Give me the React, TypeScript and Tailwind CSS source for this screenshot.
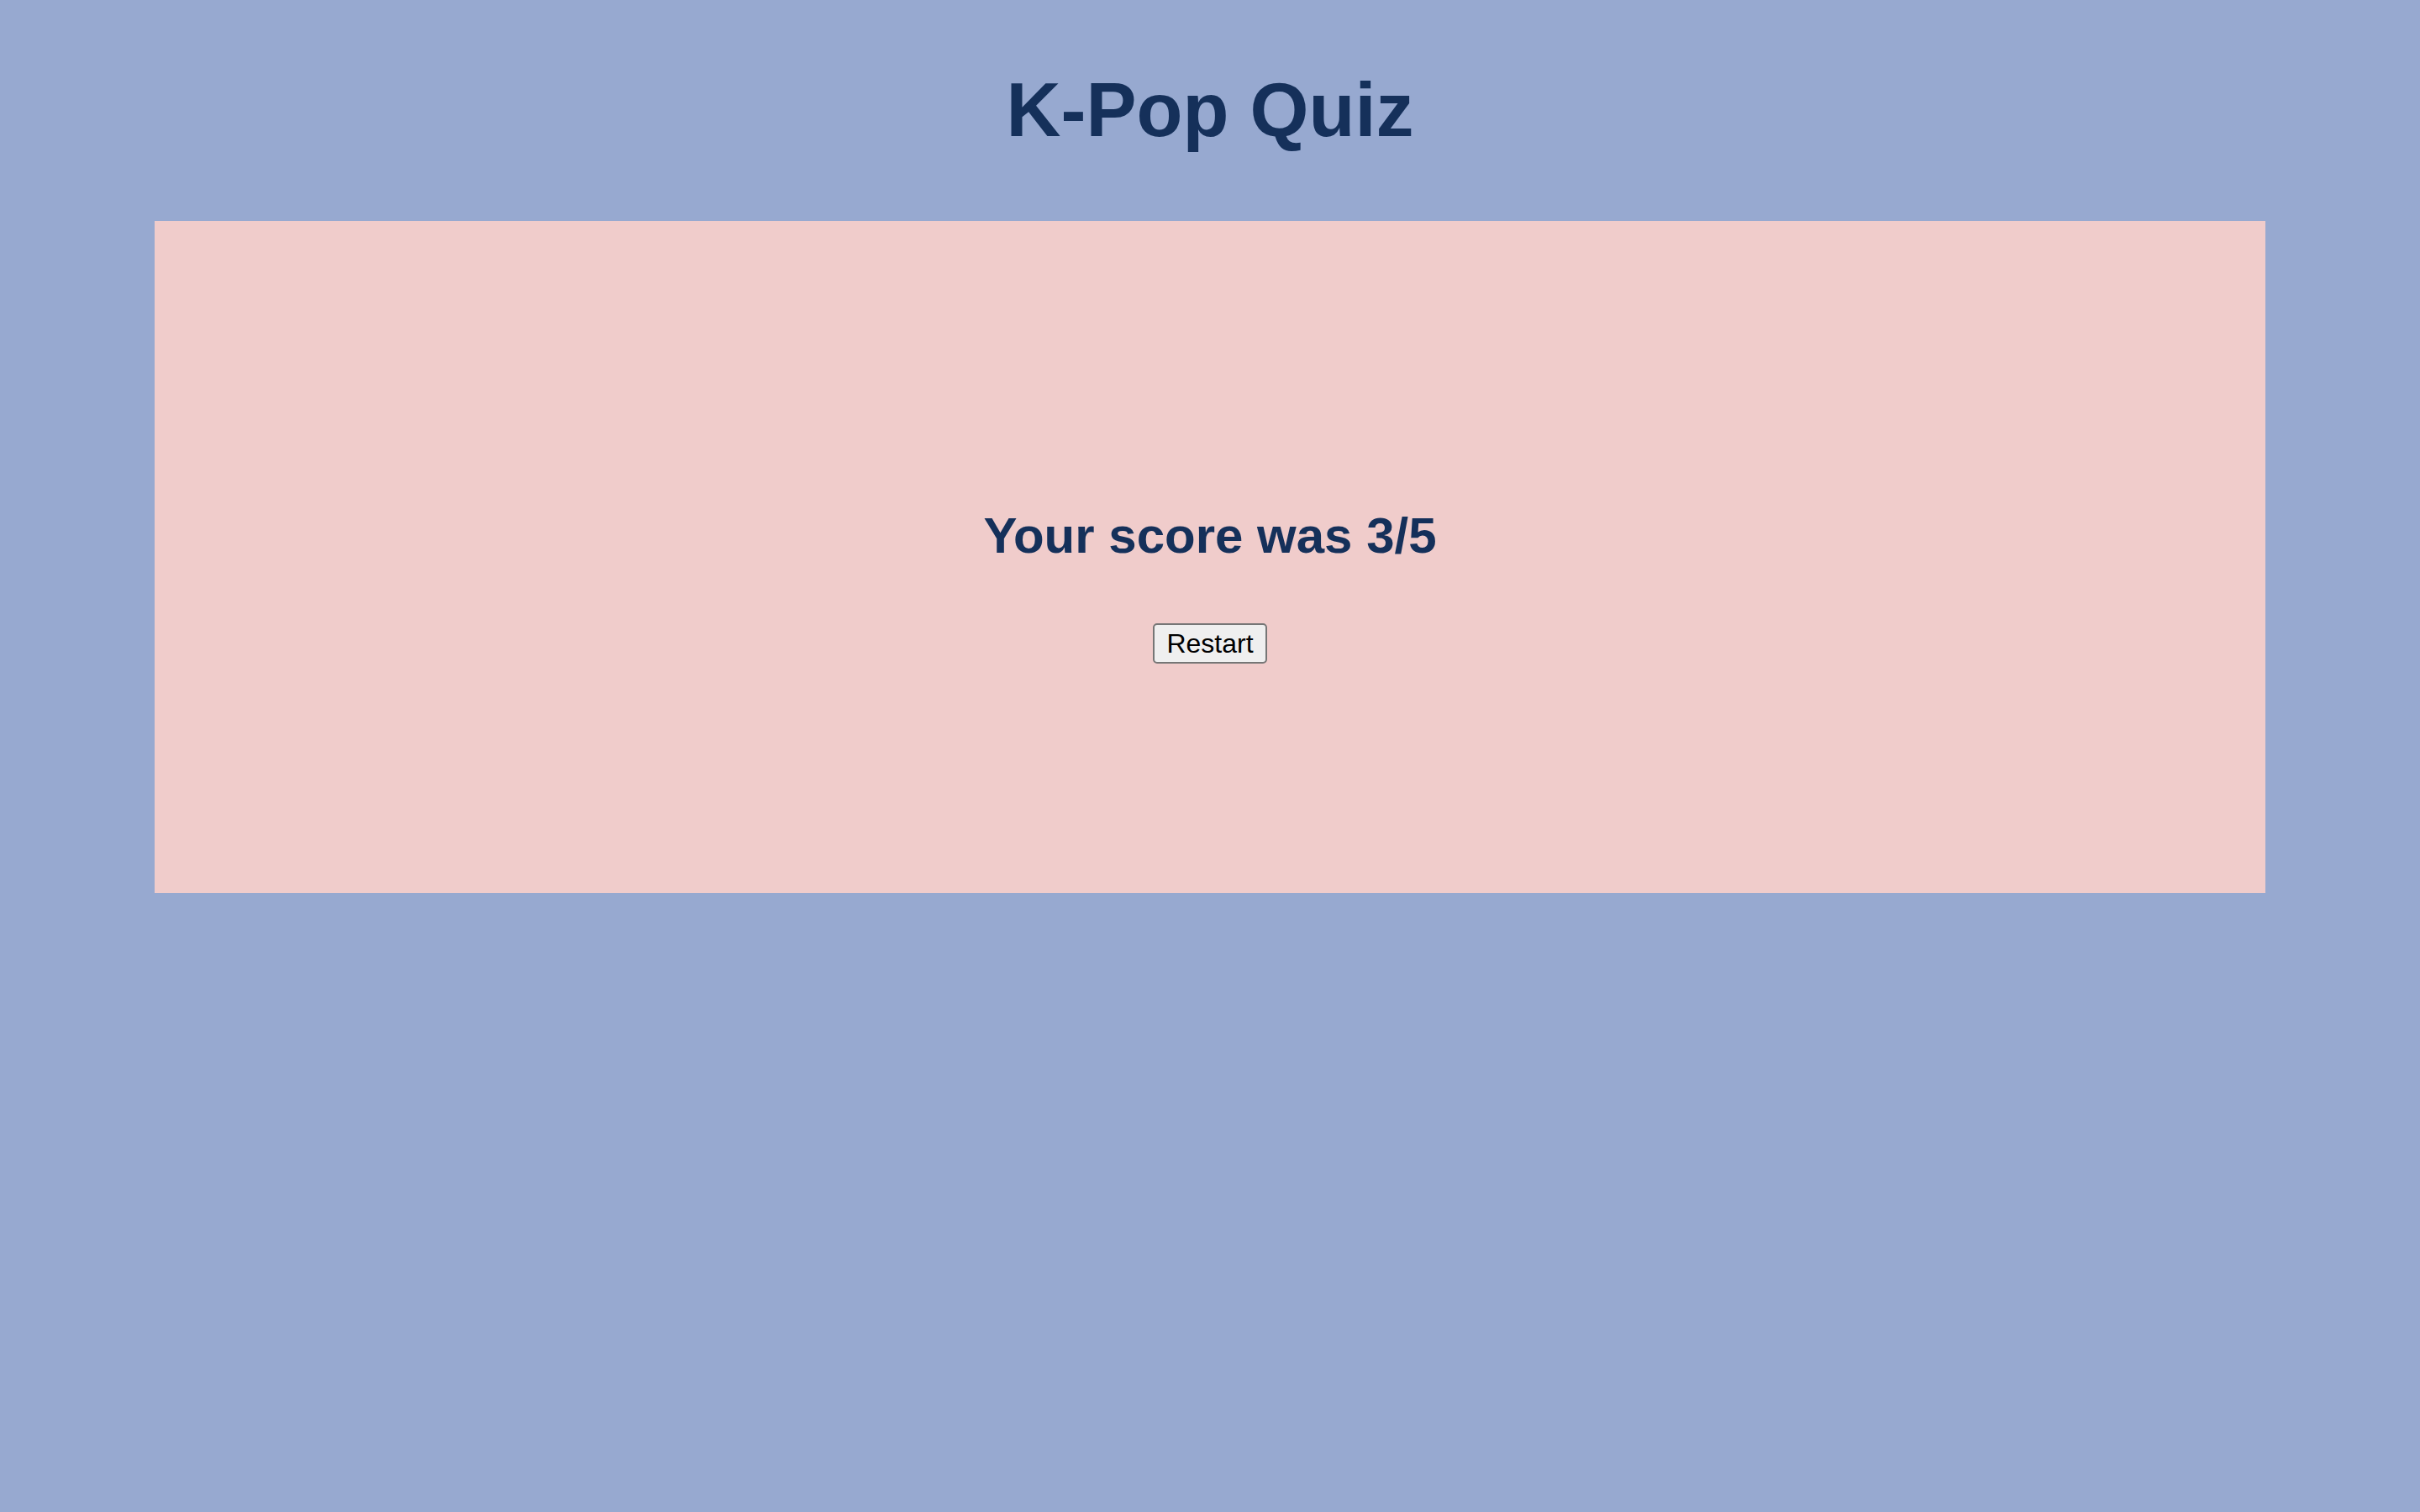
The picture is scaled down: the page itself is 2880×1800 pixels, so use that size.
import React, { useState } from 'react';

const TOTAL = 5;

const App: React.FC = () => {
  const [score] = useState(3);

  return (
    <div className="min-h-screen w-full bg-[#97a9d0] font-['Liberation_Sans',Arial,sans-serif] pt-[80px]">
      <h1 className="text-center text-[90px] font-bold leading-[1.15] text-[#15305a]">K-Pop Quiz</h1>

      <div className="mx-[184px] mt-[79px] h-[800px] bg-[#f0cccb] flex flex-col items-center pt-[340px]">
        <h2 className="text-[60px] font-bold leading-[1.15] text-[#15305a]">
          Your score was {score}/{TOTAL}
        </h2>
        {/* default browser-looking button */}
        <button className="mt-[70px] h-[48px] px-[14px] text-[32px] leading-none text-black bg-[#efefef] border-2 border-[#767676] rounded-[5px]">
          Restart
        </button>
      </div>
    </div>
  );
};

export default App;
